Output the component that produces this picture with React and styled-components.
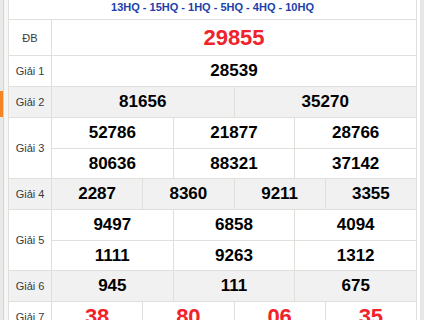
import React from "react";
import styled, { createGlobalStyle } from "styled-components";

const GlobalStyle = createGlobalStyle`
  body {
    margin: 0;
    background: #ffffff;
    font-family: "Liberation Sans", Arial, sans-serif;
  }
`;

const prizes = [
  { label: "ĐB", nums: ["29855"], cols: 1, rows: "35px", big: true },
  { label: "Giải 1", nums: ["28539"], cols: 1, rows: "30px" },
  { label: "Giải 2", nums: ["81656", "35270"], cols: 2, rows: "30px" },
  {
    label: "Giải 3",
    nums: ["52786", "21877", "28766", "80636", "88321", "37142"],
    cols: 3,
    rows: "30px 29px",
  },
  { label: "Giải 4", nums: ["2287", "8360", "9211", "3355"], cols: 4, rows: "30px" },
  {
    label: "Giải 5",
    nums: ["9497", "6858", "4094", "1111", "9263", "1312"],
    cols: 3,
    rows: "30px 29px",
  },
  { label: "Giải 6", nums: ["945", "111", "675"], cols: 3, rows: "30px" },
  { label: "Giải 7", nums: ["38", "80", "06", "35"], cols: 4, rows: "30px", big: true },
];

const App = () => {
  return (
    <>
      <GlobalStyle />
      <Page>
        <Rail>
          <RailMark />
        </Rail>
        <Gutter />
        <Board>
          <HeadRow>13HQ - 15HQ - 1HQ - 5HQ - 4HQ - 10HQ</HeadRow>
          {prizes.map((p, i) => {
            // giải 2, 4, 6 có nền xám
            const alt = i === 2 || i === 4 || i === 6;
            return (
              <PrizeRow key={p.label} $alt={alt}>
                <Label>{p.label}</Label>
                <Numbers $cols={p.cols} $rows={p.rows}>
                  {p.nums.map((n, j) => (
                    <Num key={j} $alt={alt} $big={p.big}>
                      {n}
                    </Num>
                  ))}
                </Numbers>
              </PrizeRow>
            );
          })}
        </Board>
        <Edge />
        <Track />
      </Page>
    </>
  );
};

export default App;

const Page = styled.div`
  display: flex;
  width: 424px;
  height: 320px;
  overflow: hidden;
`;

const Rail = styled.div`
  width: 3px;
  flex: none;
  background: #e9e9e9;
  border-right: 1px solid #d2d2d2;
  display: flex;
  flex-direction: column;
`;

const RailMark = styled.div`
  margin-top: 91px;
  height: 26px;
  background: #f58426;
`;

const Gutter = styled.div`
  width: 4px;
  flex: none;
  background: #f6f6f6;
`;

const Board = styled.div`
  width: 407px;
  flex: none;
  border-left: 1px solid #e2dfda;
  border-right: 1px solid #e2dfda;
  background: #ffffff;
`;

const HeadRow = styled.div`
  height: 20px;
  box-sizing: border-box;
  padding-top: 1px;
  border-bottom: 1px solid #e2dfda;
  text-align: center;
  font-size: 11px;
  font-weight: bold;
  line-height: 12px;
  color: #1c3faa;
`;

const PrizeRow = styled.div`
  display: grid;
  grid-template-columns: 43px 1fr;
  border-bottom: 1px solid #e2dfda;
  background: ${(p) => (p.$alt ? "#f1f1f1" : "#ffffff")};
`;

const Label = styled.div`
  display: flex;
  align-items: center;
  justify-content: center;
  border-right: 1px solid #e2dfda;
  font-size: 11px;
  color: #3a3a3a;
`;

const Numbers = styled.div`
  display: grid;
  grid-template-columns: repeat(${(p) => p.$cols}, 1fr);
  grid-template-rows: ${(p) => p.$rows};
  gap: 1px;
  background: #e2dfda;
`;

const Num = styled.div`
  display: flex;
  align-items: center;
  justify-content: center;
  background: ${(p) => (p.$alt ? "#f1f1f1" : "#ffffff")};
  font-size: ${(p) => (p.$big ? "22px" : "17px")};
  font-weight: bold;
  color: ${(p) => (p.$big ? "#f0222a" : "#000000")};
`;

const Edge = styled.div`
  width: 3px;
  flex: none;
  background: #ffffff;
`;

const Track = styled.div`
  width: 4px;
  flex: none;
  background: #e6e6e6;
`;
